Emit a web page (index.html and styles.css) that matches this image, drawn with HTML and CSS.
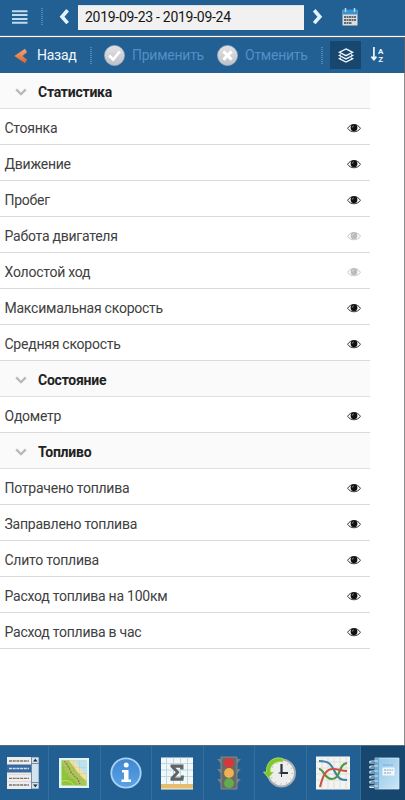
FILE: index.html
```html
<!DOCTYPE html>
<html lang="ru">
<head>
<meta charset="utf-8">
<meta name="viewport" content="width=device-width">
<title>Отчёт</title>
<link rel="stylesheet" href="styles.css">
</head>
<body>
<svg class="defs" width="0" height="0">
  <defs>
    <linearGradient id="orange" x1="0" y1="0" x2="0" y2="1"><stop offset="0" stop-color="#f2a878"/><stop offset="1" stop-color="#d9622c"/></linearGradient>
    <linearGradient id="disc" x1="0" y1="0" x2="0" y2="1"><stop offset="0" stop-color="#e2e3e6"/><stop offset="1" stop-color="#bfc1c6"/></linearGradient>
    <linearGradient id="info" x1="0" y1="0" x2="0" y2="1"><stop offset="0" stop-color="#3f86d0"/><stop offset="1" stop-color="#5ba2e6"/></linearGradient>
    <linearGradient id="book" x1="0" y1="0" x2="1" y2="1"><stop offset="0" stop-color="#8fc3e6"/><stop offset="1" stop-color="#c9e6f7"/></linearGradient>
  </defs>
  <symbol id="eye" viewBox="0 0 14 10">
    <path d="M.6 5.300C3.400.3 10.600.3 13.400 5.300 10.600 9.900 3.400 9.900.6 5.300Z" fill="#fff" stroke="#333" stroke-width="1"/>
    <circle cx="7" cy="4.700" r="3.400" fill="#111"/>
    <path d="M5.300 4.500Q5.400 3.200 6.700 2.900" fill="none" stroke="#bbb" stroke-width=".8"/>
  </symbol>
  <symbol id="down" viewBox="0 0 12 8"><path d="M1.200 1.400 6 6.200l4.800-4.800" fill="none" stroke="#b9b9b9" stroke-width="2.300"/></symbol>
</svg>
<div class="app">
  <header class="topbar">
    <svg class="menu" width="16" height="14" viewBox="0 0 16 14"><path d="M0 1.300h15.500M0 5.100h15.500M0 8.900h15.500M0 12.700h15.500" stroke="#bddcf3" stroke-width="2"/></svg>
    <i class="dots"></i>
    <svg class="prev" width="11" height="16" viewBox="0 0 11 16"><path d="M8.600 1.300 3 7.700l5.600 6.400" fill="none" stroke="#e2f3ff" stroke-width="3.600"/></svg>
    <div class="range">2019-09-23 - 2019-09-24</div>
    <svg class="next" width="11" height="16" viewBox="0 0 11 16"><path d="M2.200 1.300 7.800 7.700l-5.600 6.400" fill="none" stroke="#e2f3ff" stroke-width="3.600"/></svg>
    <svg class="calendar" width="16" height="18" viewBox="0 0 16 18">
      <path d="M.5 2h15v15.500H.5z" fill="#dfddd9"/><path d="M.5 1.500h15v5H.5z" fill="#3993d2"/>
      <path d="M3.500 0v4M12.500 0v4" stroke="#b5ddf4" stroke-width="1.500"/>
      <path d="M2 9h12M2 12h12M2 15h8" stroke="#5e6a74" stroke-width="1.900" stroke-dasharray="2 .5"/>
    </svg>
  </header>
  <div class="toolbar">
    <svg class="back" width="14" height="16" viewBox="0 0 14 16"><path d="M11 .8.3 8 11 15.200l2-3.400L8.500 8 13 4.200Z" fill="url(#orange)"/></svg>
    <span class="label active t1">Назад</span>
    <i class="dots d2"></i>
    <svg class="check" width="21" height="21" viewBox="0 0 21 21"><circle cx="10.500" cy="10.500" r="10" fill="url(#disc)" stroke="#a7b5c6" stroke-width=".7"/><path d="m5.200 10.500 4 4 6.600-8" fill="none" stroke="#fff" stroke-width="2.700"/></svg>
    <span class="label t2">Применить</span>
    <svg class="cross" width="21" height="21" viewBox="0 0 21 21"><circle cx="10.500" cy="10.500" r="10" fill="url(#disc)" stroke="#a7b5c6" stroke-width=".7"/><path d="m6.400 6.400 8.200 8.200m0-8.200-8.200 8.200" stroke="#fff" stroke-width="3"/></svg>
    <span class="label t3">Отменить</span>
    <i class="dots d3"></i>
    <div class="layers"><svg width="16" height="15" viewBox="0 0 16 15" fill="none" stroke="#f2f8fc" stroke-width="1.300"><path d="M8 .9 14.700 4.300 8 7.700 1.300 4.300Z"/><path d="m3 6.600-1.700.9L8 10.900l6.700-3.400-1.700-.9"/><path d="M3 9.800l-1.700.9L8 14.100l6.700-3.400-1.700-.9"/></svg></div>
    <svg class="sort" width="14" height="15" viewBox="0 0 14 15"><path d="M2.900 0v12M.4 9.600l2.500 3 2.500-3" fill="none" stroke="#eef7fd" stroke-width="1.700"/><text x="7" y="6.800">A</text><text x="7.200" y="14.600">Z</text></svg>
  </div>
  <main class="content">
    <div class="list">
      <div class="group"><svg><use href="#down"/></svg><b>Статистика</b></div>
      <div class="row"><span>Стоянка</span><svg><use href="#eye"/></svg></div>
      <div class="row"><span>Движение</span><svg><use href="#eye"/></svg></div>
      <div class="row"><span>Пробег</span><svg><use href="#eye"/></svg></div>
      <div class="row off"><span>Работа двигателя</span><svg><use href="#eye"/></svg></div>
      <div class="row off"><span>Холостой ход</span><svg><use href="#eye"/></svg></div>
      <div class="row"><span>Максимальная скорость</span><svg><use href="#eye"/></svg></div>
      <div class="row"><span>Средняя скорость</span><svg><use href="#eye"/></svg></div>
      <div class="group"><svg><use href="#down"/></svg><b>Состояние</b></div>
      <div class="row"><span>Одометр</span><svg><use href="#eye"/></svg></div>
      <div class="group"><svg><use href="#down"/></svg><b>Топливо</b></div>
      <div class="row"><span>Потрачено топлива</span><svg><use href="#eye"/></svg></div>
      <div class="row"><span>Заправлено топлива</span><svg><use href="#eye"/></svg></div>
      <div class="row"><span>Слито топлива</span><svg><use href="#eye"/></svg></div>
      <div class="row"><span>Расход топлива на 100км</span><svg><use href="#eye"/></svg></div>
      <div class="row"><span>Расход топлива в час</span><svg><use href="#eye"/></svg></div>
    </div>
  </main>
  <nav class="tabs">
    <div class="tab first"><svg viewBox="0 0 34 34">
      <path d="M1 1h32v32H1z" fill="#efeeec"/><path d="M1 8.500h24.500v8H1z" fill="#36699f"/>
      <path d="M3 5h20M3 22.300h20M3 29h20" stroke="#77736e" stroke-width="1.300" stroke-dasharray="3 .7"/><path d="M3 12.500h20" stroke="#cfdfee" stroke-width="1.600" stroke-dasharray="3 .7"/>
      <path d="M1 18.500h24M1 25.500h24" stroke="#d5d2ce" stroke-width=".7"/>
      <path d="M25.500 1H33v32h-7.500z" fill="#d2e2ef" stroke="#48698a" stroke-width=".7"/><path d="M25.500 7.500h7.500M25.500 26.500h7.500" stroke="#48698a" stroke-width=".7"/>
      <path d="m27 5.500 2.300-2.700 2.300 2.700zM27 28.500l2.300 2.700 2.300-2.700z" fill="#142a40"/></svg></div>
    <div class="tab"><svg viewBox="0 0 34 34">
      <path d="M2 2h30v30H2z" fill="#e4f3fa"/><path d="M4.500 4.500h25v25h-25z" fill="#8cc63a"/>
      <path d="M4.500 4.500H13L29.500 26v3.500H23L9 17z" fill="#a9c65a"/><path d="M12 4.500h17.500V25.500L22 18z" fill="#f4e0a0"/><path d="M16.500 4.500h13V19.500z" fill="#b8e3f5"/>
      <path d="M4.500 11.500h25m-25 6h25m-25 6h25M10.500 4.500v25m6-25v25m6-25v25" stroke="#6b9a62" stroke-opacity=".2" stroke-width=".6"/>
      <path d="M7 5q4 4 6 9t7 8l3 6" fill="none" stroke="#a74d2e" stroke-width="1" stroke-dasharray="2 1"/><path d="M5 25q7-2 12 4" stroke="#e6d353" fill="none"/></svg></div>
    <div class="tab"><svg viewBox="0 0 34 34"><circle cx="17" cy="17" r="14.700" fill="url(#info)" stroke="#a9d3f6" stroke-width="1.800"/><circle cx="17.200" cy="9" r="2.500" fill="#fff"/><path d="M13 14h6.500v9.500H22V26h-9.500v-2.500H15v-7h-2z" fill="#fff"/></svg></div>
    <div class="tab"><svg viewBox="0 0 34 34"><path d="M1 1.500h32v32H1z" fill="#f3f7f6"/><path d="M1 7.500h32M1 14h32M1 20.500h32M6.500 1.500v27m7-27v27m7-27v27m7-27v27" stroke="#b8d9e6"/><path d="M1 28h32v4.500H1z" fill="#e6bd6d"/>
      <path d="M10.500 8.500h13v5h-3l-.6-1.800h-4.500l4.200 4.600-4.700 5.200h5.500l.8-2h2.800l-.6 5.300H10.500v-3l5.300-5.600-5.300-5.200z" fill="#606368"/></svg></div>
    <div class="tab"><svg viewBox="0 0 34 34"><path d="M5 3h6v7zM29 3h-6v7zM5 13h6v7zM29 13h-6v7zM5 23h6v7zM29 23h-6v7z" fill="#6f7f89"/><path d="M9 1h16v32H9z" fill="#686b65" stroke="#8b9698" stroke-width=".8"/><circle cx="17" cy="6.800" r="4.900" fill="#dd343a"/><circle cx="17" cy="17" r="4.900" fill="#f0b250"/><circle cx="17" cy="27.200" r="4.900" fill="#62ac4d"/></svg></div>
    <div class="tab"><svg viewBox="0 0 34 34"><circle cx="18.500" cy="17" r="13.500" fill="#eeefed" stroke="#a7adb0" stroke-width="2"/><circle cx="18.500" cy="17" r="11" fill="none" stroke="#b9bec0" stroke-width="1.500" stroke-dasharray="1 4.760"/><path d="M18.500 8v9H25" fill="none" stroke="#263342" stroke-width="2.200"/><path d="M18.500 17v4M18.500 17h-3" stroke="#263342"/><path d="M20 2.500C10-.5 2.500 7 3.500 16H.5l5 6 5-6H7.500C7 9 12 5 20 5.800z" fill="#80c62e" stroke="#bde56e" stroke-width=".7"/></svg></div>
    <div class="tab chart"><svg viewBox="0 0 34 34"><path d="M0 .5h34v33H0z" fill="#f4f3f0"/><path d="M0 6h34M0 12h34M0 18h34M0 24h34M6 .5v33m6-33v33m6-33v33m6-33v33m6-33v33" stroke="#d9d9d7" stroke-width=".8"/><g fill="none" stroke-width="2.100"><path d="M3 5c10 0 12 3 16 11s7 8 12 8" stroke="#3c82aa"/><path d="M3 13c5 0 5 10 13 10 9 0 6-15 15-16" stroke="#4e9844"/><path d="M4 31c3-12 6-18 13-18 6 0 8 2 14 2" stroke="#c85246"/></g></svg></div>
    <div class="tab selected"><svg viewBox="0 0 34 34"><path d="M8 2h24v31H8z" fill="url(#book)" stroke="#e2f4fc" stroke-width=".7"/><path d="M8 2h4v31H8z" fill="#6daad4"/><g fill="none" stroke="#d6e8f2" stroke-width="1.200"><path d="M11 5H5q-3 0-2 2h4M11 10H5q-3 0-2 2h4M11 15H5q-3 0-2 2h4M11 20H5q-3 0-2 2h4M11 25H5q-3 0-2 2h4M11 30H5q-3 0-2 1.500h4"/></g><path d="M15.500 11.500h12v8h-12z" fill="#f1f8fb"/><path d="M16 9h10" stroke="#6faed5" stroke-dasharray="3 .7"/><path d="M17 14h9m-9 3h7" stroke="#7c9eb7" stroke-dasharray="2 .7"/></svg></div>
  </nav>
</div>
</body>
</html>
```

FILE: styles.css
```css
* { box-sizing: border-box; }
body { margin: 0; font-family: Roboto, "Liberation Sans", sans-serif; }
svg { display: block; flex: none; }
.defs { position: absolute; }
.app { width: 405px; height: 800px; display: flex; flex-direction: column; background: #fff; overflow: hidden; }
.topbar { height: 36px; flex: none; display: flex; align-items: center; background: #225f92; padding: 0 0 2px 12px; border-bottom: 1px solid #406f98; }
.dots { width: 2px; height: 17px; flex: none; margin-left: 13px; background: repeating-linear-gradient(to bottom, #5288b5 0 1px, transparent 1px 2px); }
.prev { margin-left: 16px; }
.range { width: 226px; height: 25px; margin: 2px 0 0 8px; padding-left: 7px; background: #f1f1f1; border-top: 1px solid #dce4ea; color: #161616; font-size: 14px; letter-spacing: -.28px; line-height: 22px; white-space: nowrap; }
.next { margin-left: 8px; }
.calendar { margin-left: 19px; }
.toolbar { height: 36px; flex: none; display: flex; align-items: center; margin-top: 1px; padding-left: 14px; background: #225f92; border-top: 1px solid #4a6880; border-right: 1px solid #4e6071; }
.label { flex: none; font-size: 14px; letter-spacing: -.25px; line-height: 20px; margin-bottom: 1px; color: #5190c6; white-space: nowrap; }
.active { color: #f0f8fd; }
.t1 { width: 40px; margin-left: 9px; }
.t2 { width: 72px; margin-left: 7px; }
.t3 { width: 63px; margin-left: 7px; }
.check { margin-left: 12px; }
.cross { margin-left: 13px; }
.layers { width: 31px; height: 28px; margin: 0 0 1px 7px; display: grid; place-items: center; background: #17476e; }
.d3 { margin-left: 13px; }
.sort { margin-left: 10px; margin-bottom: 2px; overflow: visible; }
.sort text { font: 700 8px Roboto, sans-serif; fill: #eef7fd; }
.content { flex: 1; min-height: 0; border-right: 1px solid #8c8c8c; }
.list { width: 370px; }
.group, .row { height: 36px; display: flex; align-items: center; border-bottom: 1px solid #d9d9d9; font-size: 14px; letter-spacing: -.24px; padding-top: 3px; }
.group { background: #fafafa; padding-left: 15px; color: #222; border-color: #e0e0e0; }
.group svg { width: 12px; height: 8px; margin-right: 11px; }
.row { padding-left: 4.500px; padding-right: 9px; justify-content: space-between; color: #404040; }
.row svg { width: 14px; height: 10px; }
.off svg { opacity: .28; }
.tabs { height: 55px; flex: none; display: grid; grid-template-columns: 49px repeat(5, 51.500px) 54px 1fr; border-top: 1px solid #546d82; background: #225f92; }
.tab { display: grid; place-items: center; padding-bottom: 1px; border-right: 1px solid #326f9f; overflow: hidden; }
.first { padding-right: 3px; }
.chart { padding-right: 1px; }
.tab svg { width: 34px; height: 34px; }
.selected { background: #17476e; border-right: 0; padding-left: 2px; }
```
